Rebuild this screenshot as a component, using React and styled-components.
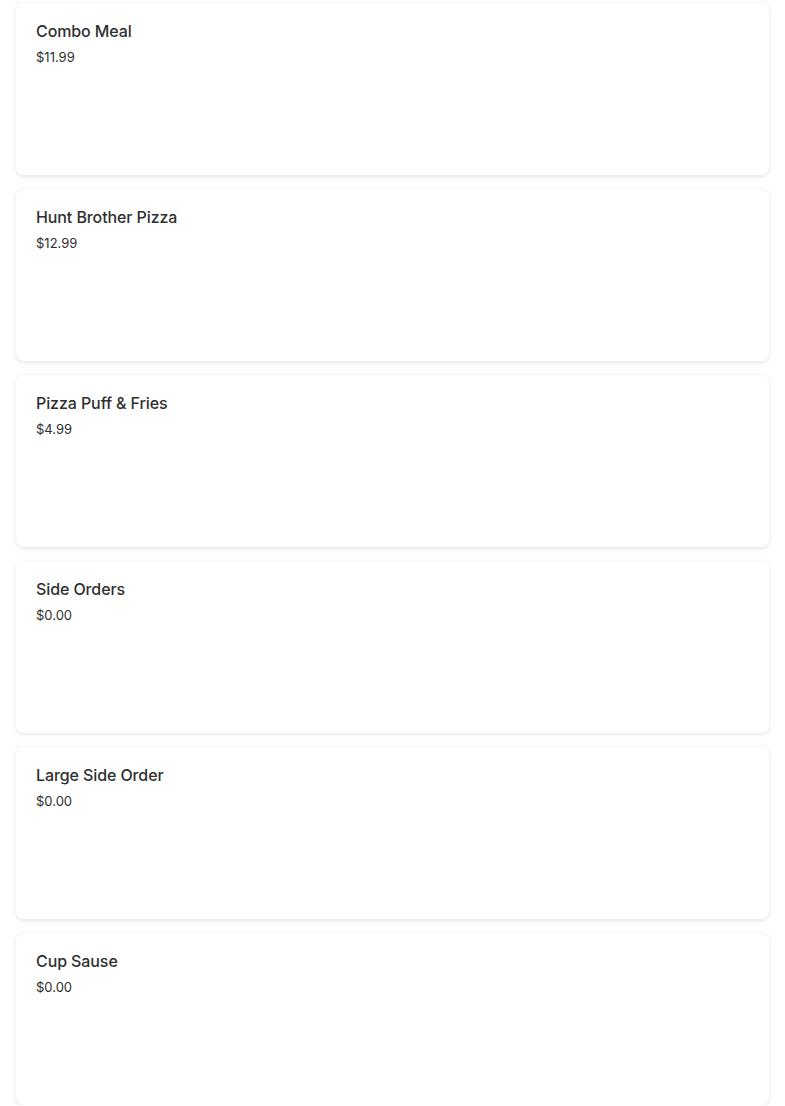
import React from 'react';
import styled, { createGlobalStyle } from 'styled-components';

const GlobalStyle = createGlobalStyle`
  body {
    margin: 0;
    background: #ffffff;
    font-family: Inter, "Liberation Sans", sans-serif;
    color: #2d2d2d;
  }
`;

const List = styled.div`
  display: flex;
  flex-direction: column;
  gap: 14px;
  padding: 3px 16px 0;
`;

const Card = styled.div`
  height: 172px;
  box-sizing: border-box;
  padding: 19px 20px;
  background: #fff;
  border-radius: 8px;
  box-shadow: 0 1px 6px rgba(0, 0, 0, 0.08), 0 2px 3px rgba(0, 0, 0, 0.04);
`;

const Title = styled.div`
  font-size: 16px;
  font-weight: 500;
  line-height: 18px;
  color: #2f2f2f;
  letter-spacing: -0.1px;
`;

const Price = styled.div`
  margin-top: 8px;
  font-size: 13px;
  line-height: 18px;
  color: #2f2f2f;
`;

const items = [
  { name: 'Combo Meal', price: '$11.99' },
  { name: 'Hunt Brother Pizza', price: '$12.99' },
  { name: 'Pizza Puff & Fries', price: '$4.99' },
  { name: 'Side Orders', price: '$0.00' },
  { name: 'Large Side Order', price: '$0.00' },
  { name: 'Cup Sause', price: '$0.00' },
];

export default function App() {
  return (
    <>
      <GlobalStyle />
      <List>
        {items.map((item) => (
          <Card key={item.name}>
            <Title>{item.name}</Title>
            <Price>{item.price}</Price>
          </Card>
        ))}
      </List>
    </>
  );
}
